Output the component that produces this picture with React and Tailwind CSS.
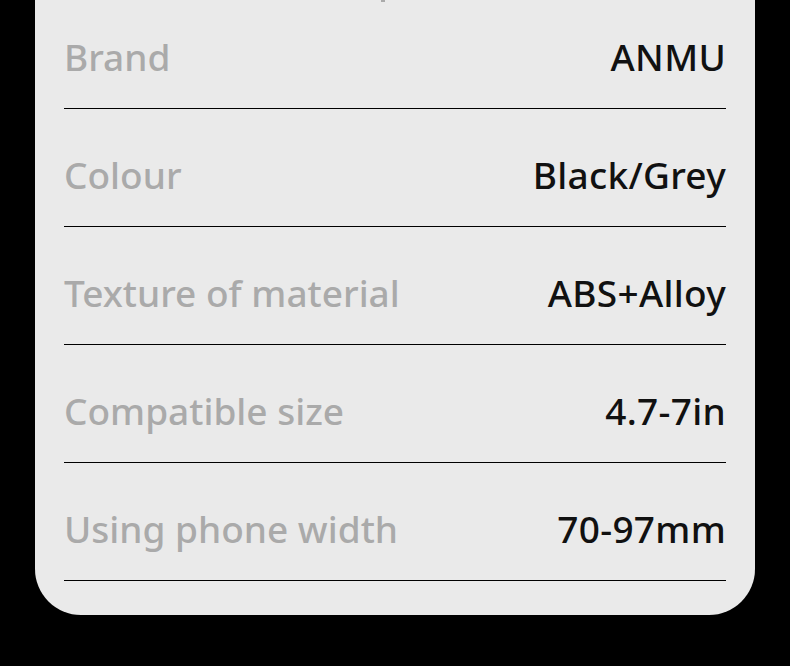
import React from 'react';

const specs = [
  { label: 'Brand', value: 'ANMU' },
  { label: 'Colour', value: 'Black/Grey' },
  { label: 'Texture of material', value: 'ABS+Alloy' },
  { label: 'Compatible size', value: '4.7-7in' },
  { label: 'Using phone width', value: '70-97mm' },
];

export default function App() {
  return (
    <div className="min-h-[666px] w-[790px] bg-black" style={{ fontFamily: '"Noto Sans", "Open Sans", sans-serif' }}>
      <div className="mx-[35px] w-[720px] rounded-b-[46px] bg-[#eaeaea] px-[29px] pb-[34px]">
        {/* descender of the title cut off above */}
        <div className="relative h-0">
          <div className="absolute left-[317px] top-0 h-[2px] w-[4px] bg-[#aaaaaa]" />
        </div>
        {specs.map((s, i) => (
          <div
            key={s.label}
            className={`flex items-center justify-between border-b border-black pb-[26px] ${i === 0 ? 'pt-[32px]' : 'pt-[41px]'}`}
          >
            <span className="text-[37px] font-medium leading-[50px] text-[#aaaaaa]">{s.label}</span>
            <span className="text-[37px] font-medium leading-[50px] tracking-[0.3px] text-[#111111]">{s.value}</span>
          </div>
        ))}
      </div>
    </div>
  );
}
